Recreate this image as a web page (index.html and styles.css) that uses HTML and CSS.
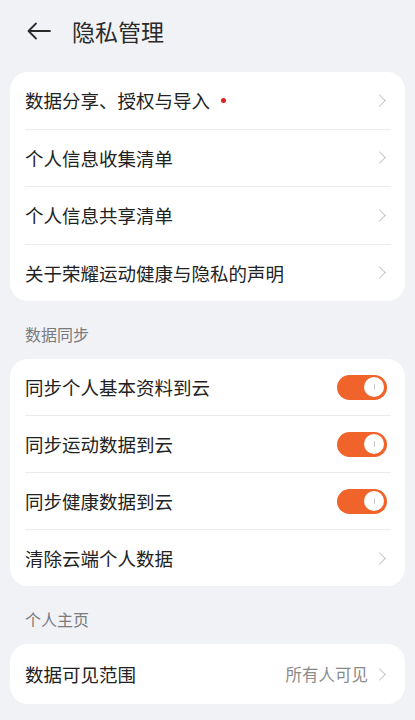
FILE: index.html
```html
<!DOCTYPE html>
<html lang="zh-CN">
<head>
  <meta charset="UTF-8" />
  <meta name="viewport" content="width=device-width, initial-scale=1.0"/>
  <title>隐私管理</title>
  <link rel="stylesheet" href="styles.css">
</head>
<body>
  <div class="header">
    <svg class="back" width="24" height="18" viewBox="0 0 24 18">
      <path d="M23 9H2M9 1.5L1.5 9L9 16.5" fill="none" stroke="#2a2a2a" stroke-width="1.8" stroke-linecap="round" stroke-linejoin="round"/>
    </svg>
    <h1>隐私管理</h1>
  </div>

  <div class="card">
    <div class="row tall">
      <span class="label">数据分享、授权与导入<i class="dot"></i></span>
      <span class="chev"></span>
    </div>
    <div class="row tall">
      <span class="label">个人信息收集清单</span>
      <span class="chev"></span>
    </div>
    <div class="row tall">
      <span class="label">个人信息共享清单</span>
      <span class="chev"></span>
    </div>
    <div class="row tall">
      <span class="label">关于荣耀运动健康与隐私的声明</span>
      <span class="chev"></span>
    </div>
  </div>

  <div class="section">数据同步</div>
  <div class="card">
    <div class="row">
      <span class="label">同步个人基本资料到云</span>
      <span class="toggle"><b></b></span>
    </div>
    <div class="row">
      <span class="label">同步运动数据到云</span>
      <span class="toggle"><b></b></span>
    </div>
    <div class="row">
      <span class="label">同步健康数据到云</span>
      <span class="toggle"><b></b></span>
    </div>
    <div class="row">
      <span class="label">清除云端个人数据</span>
      <span class="chev"></span>
    </div>
  </div>

  <div class="section">个人主页</div>
  <div class="card">
    <div class="row single">
      <span class="label">数据可见范围</span>
      <span class="value">所有人可见</span>
      <span class="chev"></span>
    </div>
  </div>
</body>
</html>
```

FILE: styles.css
```css
body {
  margin: 0;
  background: #f1f2f6;
  font-family: "Noto Sans CJK SC", "Noto Sans", sans-serif;
  color: #222;
}
.header {
  height: 62px;
  display: flex;
  align-items: center;
  padding-left: 27px;
  margin-bottom: 10px;
}
.back {
  display: block;
}
.header h1 {
  margin: 0 0 0 21px;
  font-size: 23px;
  font-weight: 400;
  line-height: 1;
  color: #2a2a2a;
}
.card {
  margin: 0 10px;
  background: #fff;
  border-radius: 18px;
  padding: 0 14px 0 15px;
}
.row {
  height: 56px;
  display: flex;
  align-items: center;
  border-bottom: 1px solid #ebebeb;
}
.row.tall {
  height: 56.5px;
}
.row.single {
  height: 60px;
}
.row:last-child {
  border-bottom: none;
}
.label {
  flex: 1;
  font-size: 18.5px;
  display: flex;
  align-items: center;
}
.dot {
  width: 5px;
  height: 5px;
  border-radius: 50%;
  background: #e02020;
  margin-left: 11px;
}
.chev {
  width: 8px;
  height: 8px;
  border-top: 1.5px solid #c4c4c4;
  border-right: 1.5px solid #c4c4c4;
  transform: rotate(45deg);
  margin-right: 7px;
}
.value {
  font-size: 16.5px;
  color: #8a8a8a;
  margin-right: 7px;
}
.section {
  padding: 22px 25px 14px;
  font-size: 16px;
  line-height: 22px;
  color: #7a7a7a;
}
.toggle {
  width: 50px;
  height: 25px;
  border-radius: 13px;
  background: #f0642c;
  display: flex;
  align-items: center;
  justify-content: flex-end;
  padding-right: 3px;
  box-sizing: border-box;
  margin-right: 4px;
}
.toggle b {
  width: 20px;
  height: 20px;
  border-radius: 50%;
  background: #fff;
  display: flex;
  align-items: center;
  justify-content: center;
}
.toggle b::after {
  content: "";
  width: 1px;
  height: 6px;
  background: #c8c8c8;
}
```
